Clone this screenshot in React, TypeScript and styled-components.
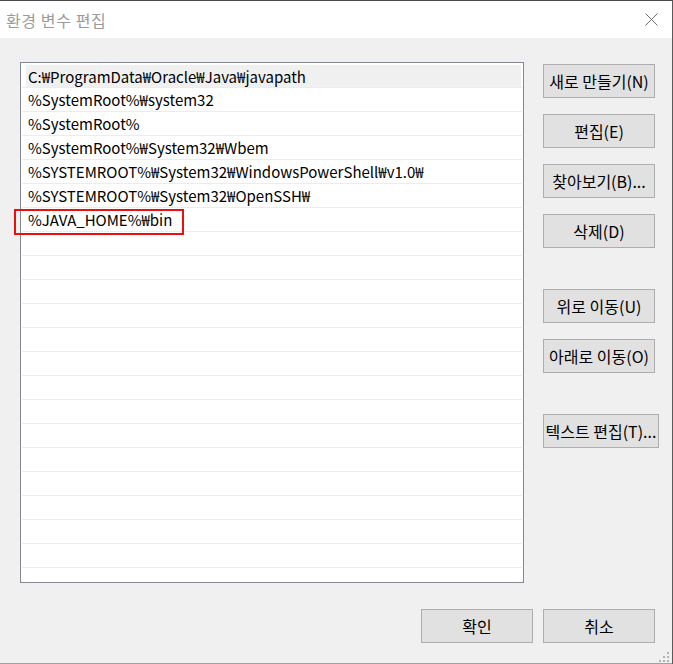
import React from "react";
import styled, { createGlobalStyle } from "styled-components";

const Global = createGlobalStyle`
  html, body { margin: 0; padding: 0; background: #3a3a3a; }
  body { font-family: "Noto Sans CJK KR", "Noto Sans", sans-serif; }
`;

const Window = styled.div`
  width: 672px;
  height: 663px;
  border-top: 1px solid #4a4a4a;
  border-right: 1px solid #5a5a5a;
  background: #f0f0f0;
  display: flex;
  flex-direction: column;
  position: relative;
  overflow: hidden;
`;

const TitleBar = styled.div`
  height: 37px;
  background: #ffffff;
  display: flex;
  align-items: center;
  justify-content: space-between;
  padding: 0 14px 0 6px;
  flex-shrink: 0;
`;

const Title = styled.div`
  font-family: "Noto Sans CJK KR", sans-serif;
  font-size: 16px;
  color: #9a9a9a;
  letter-spacing: 0.6px;
`;

const CloseIcon = styled.svg`
  width: 13px;
  height: 13px;
  display: block;
`;

const Body = styled.div`
  flex: 1;
  display: flex;
  flex-direction: column;
  padding: 24px 13px 0 20px;
  border-bottom: 1px solid #a0a0a0;
`;

const Main = styled.div`
  display: flex;
  gap: 19px;
`;

const ListBox = styled.div`
  width: 500px;
  height: 518px;
  flex-shrink: 0;
  border: 1px solid #828790;
  background: #ffffff;
  padding: 1px 1px 0 1px;
  box-sizing: content-box;
  position: relative;
`;

const Viewport = styled.div`
  height: 100%;
  overflow: hidden;
  display: flex;
  flex-direction: column;
`;

const Row = styled.div`
  height: 23px;
  border-bottom: 1px solid #ececec;
  display: flex;
  padding: 0 1px 0 4px;
  flex-shrink: 0;
`;

const Label = styled.div<{ $active?: boolean }>`
  flex: 1;
  display: flex;
  align-items: center;
  padding-left: 2px;
  margin-top: ${(p) => (p.$active ? "1px" : "0")};
  background: ${(p) => (p.$active ? "#f0f0f0" : "transparent")};
  font-family: "Noto Sans CJK KR", "Noto Sans", sans-serif;
  font-size: 15px;
  color: #000;
  white-space: nowrap;
`;

const Marker = styled.div`
  position: absolute;
  left: -7px;
  top: 146px;
  width: 166px;
  height: 22px;
  border: 2px solid #e81010;
  pointer-events: none;
`;

const Side = styled.div`
  display: flex;
  flex-direction: column;
  align-items: flex-start;
  padding-top: 2px;
`;

const Button = styled.button<{ $gap?: number; $wide?: boolean }>`
  width: ${(p) => (p.$wide ? "116px" : "112px")};
  height: 34px;
  margin-top: ${(p) => p.$gap ?? 0}px;
  border: 1px solid #adadad;
  background: #e1e1e1;
  font-family: "Noto Sans CJK KR", sans-serif;
  font-size: 16px;
  color: #000;
  padding: 0;
  display: flex;
  align-items: center;
  justify-content: center;
  white-space: nowrap;
  flex-shrink: 0;
`;

const Footer = styled.div`
  display: flex;
  justify-content: flex-end;
  gap: 10px;
  margin-top: 26px;
  padding-right: 4px;
`;

const Grip = styled.svg`
  position: absolute;
  right: 2px;
  bottom: 1px;
  width: 12px;
  height: 12px;
`;

const paths = [
  "C:₩ProgramData₩Oracle₩Java₩javapath",
  "%SystemRoot%₩system32",
  "%SystemRoot%",
  "%SystemRoot%₩System32₩Wbem",
  "%SYSTEMROOT%₩System32₩WindowsPowerShell₩v1.0₩",
  "%SYSTEMROOT%₩System32₩OpenSSH₩",
  "%JAVA_HOME%₩bin",
];

const TOTAL_ROWS = 22;

export default function App() {
  const rows = Array.from({ length: TOTAL_ROWS }, (_, i) => paths[i] ?? "");
  return (
    <>
      <Global />
      <Window>
        <TitleBar>
          <Title>환경 변수 편집</Title>
          <CloseIcon viewBox="0 0 13 13">
            <path d="M0.5 0.5 L12.5 12.5 M12.5 0.5 L0.5 12.5" stroke="#6e6e6e" strokeWidth="1" fill="none" />
          </CloseIcon>
        </TitleBar>
        <Body>
          <Main>
            <ListBox>
              <Viewport>
                {rows.map((text, i) => (
                  <Row key={i}>
                    <Label $active={i === 0}>{text}</Label>
                  </Row>
                ))}
              </Viewport>
              <Marker />
            </ListBox>
            <Side>
              <Button>새로 만들기(N)</Button>
              <Button $gap={16}>편집(E)</Button>
              <Button $gap={16}>찾아보기(B)...</Button>
              <Button $gap={16}>삭제(D)</Button>
              <Button $gap={41}>위로 이동(U)</Button>
              <Button $gap={16}>아래로 이동(O)</Button>
              <Button $gap={41} $wide>텍스트 편집(T)...</Button>
            </Side>
          </Main>
          <Footer>
            <Button>확인</Button>
            <Button>취소</Button>
          </Footer>
        </Body>
        <Grip viewBox="0 0 12 12">
          {[
            [8, 0],
            [4, 4],
            [8, 4],
            [0, 8],
            [4, 8],
            [8, 8],
          ].map(([x, y], i) => (
            <rect key={i} x={x + 1} y={y + 1} width="2" height="2" fill="#b4b4b4" />
          ))}
        </Grip>
      </Window>
    </>
  );
}
